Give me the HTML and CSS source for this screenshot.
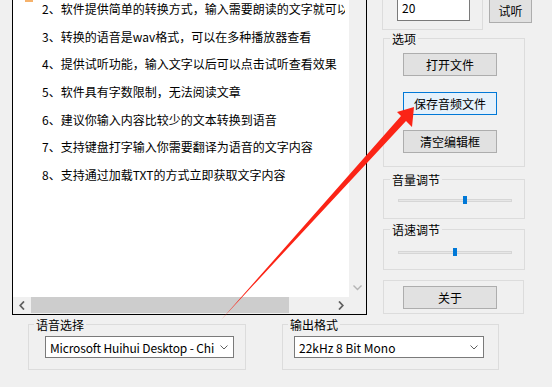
FILE: index.html
```html
<!DOCTYPE html>
<html lang="zh-CN">
<head>
    <meta charset="UTF-8">
    <title>文字转语音</title>
    <link rel="stylesheet" href="styles.css">
</head>
<body>
<div class="window">
    <div class="top">
        <!-- text editor with scrollbars -->
        <div class="editor">
            <div class="editor-body">
                <div class="text">
                    <div class="lines">
                        <div class="mark"></div>
                        <p class="first">2、软件提供简单的转换方式，输入需要朗读的文字就可以转换成语音</p>
                        <p>3、转换的语音是wav格式，可以在多种播放器查看</p>
                        <p>4、提供试听功能，输入文字以后可以点击试听查看效果</p>
                        <p>5、软件具有字数限制，无法阅读文章</p>
                        <p>6、建议你输入内容比较少的文本转换到语音</p>
                        <p>7、支持键盘打字输入你需要翻译为语音的文字内容</p>
                        <p>8、支持通过加载TXT的方式立即获取文字内容</p>
                    </div>
                </div>
                <div class="vscroll">
                    <svg width="9" height="6" viewBox="0 0 9 6"><polyline points="0.5,0.5 4.5,4.5 8.5,0.5" fill="none" stroke="#b4b4b4" stroke-width="1.4"/></svg>
                </div>
            </div>
            <div class="hscroll">
                <span class="hbtn"><svg width="6" height="9" viewBox="0 0 6 9"><polyline points="5,0.5 1.2,4.5 5,8.5" fill="none" stroke="#606060" stroke-width="1.8"/></svg></span>
                <div class="htrack"><div class="hthumb"></div></div>
                <span class="hbtn"><svg width="6" height="9" viewBox="0 0 6 9"><polyline points="1,0.5 4.8,4.5 1,8.5" fill="none" stroke="#606060" stroke-width="1.8"/></svg></span>
                <span class="corner"></span>
            </div>
        </div>

        <div class="side">
            <div class="row-listen">
                <div class="group-num">
                    <div class="num">20</div>
                </div>
                <button class="btn btn-listen">试听</button>
            </div>

            <fieldset class="group options">
                <legend>选项</legend>
                <button class="btn">打开文件</button>
                <button class="btn focus">保存音频文件</button>
                <button class="btn">清空编辑框</button>
            </fieldset>

            <fieldset class="group volume">
                <legend>音量调节</legend>
                <div class="slider"><span class="thumb" style="left: 64px"></span></div>
            </fieldset>

            <fieldset class="group speed">
                <legend>语速调节</legend>
                <div class="slider"><span class="thumb" style="left: 54px"></span></div>
            </fieldset>

            <div class="group about">
                <button class="btn">关于</button>
            </div>
        </div>
    </div>

    <div class="bottom">
        <fieldset class="group voice">
            <legend>语音选择</legend>
            <div class="combo">
                <span>Microsoft Huihui Desktop - Chi</span>
                <svg width="8" height="5" viewBox="0 0 8 5"><polyline points="0.5,0.5 4,4 7.5,0.5" fill="none" stroke="#606060" stroke-width="1"/></svg>
            </div>
        </fieldset>
        <fieldset class="group format">
            <legend>输出格式</legend>
            <div class="combo">
                <span>22kHz 8 Bit Mono</span>
                <svg width="8" height="5" viewBox="0 0 8 5"><polyline points="0.5,0.5 4,4 7.5,0.5" fill="none" stroke="#606060" stroke-width="1"/></svg>
            </div>
        </fieldset>
    </div>

    <!-- red annotation arrow drawn over the window -->
    <svg class="pointer" width="552" height="387" viewBox="0 0 552 387">
        <polygon points="414,107 412,127 406,121 221,320 401,116 397,112" fill="#fb2416"/>
    </svg>
</div>
</body>
</html>
```

FILE: styles.css
```css
* {
    box-sizing: border-box;
}

body {
    margin: 0;
    background: #f0f0f0;
    font-family: "Noto Sans CJK SC", sans-serif;
    font-size: 12px;
    color: #000;
    overflow: hidden;
}

.window {
    position: relative;
    width: 552px;
    height: 387px;
    overflow: hidden;
}

.top {
    display: flex;
    align-items: flex-start;
    height: 315px;
}

/* editor */
.editor {
    margin-left: 12px;
    width: 355px;
    height: 315px;
    border: 1px solid #000;
    border-top: none;
    display: flex;
    flex-direction: column;
}

.editor-body {
    display: flex;
    height: 297px;
    background: #fff;
}

.text {
    flex: 1;
    min-width: 0;
}

.lines {
    margin-right: 4px;
    overflow: hidden;
    white-space: nowrap;
    padding-left: 29px;
    height: 297px;
}

.mark {
    width: 8px;
    height: 2px;
    margin-left: -17px;
    background: #f6b26b;
}

.lines p {
    margin: 0;
    height: 27.7px;
    line-height: 27.7px;
}

.lines p.first {
    margin-top: -7px;
}

.vscroll {
    width: 17px;
    background: #f0f0f0;
    display: flex;
    flex-direction: column;
    justify-content: flex-end;
    align-items: center;
    padding-bottom: 6px;
}

.vscroll svg {
    display: block;
}

.hscroll {
    display: flex;
    height: 17px;
    background: #f0f0f0;
}

.hbtn {
    width: 17px;
    display: flex;
    align-items: center;
    justify-content: center;
}

.htrack {
    width: 302px;
}

.hthumb {
    margin-left: 1px;
    width: 258px;
    height: 16px;
    background: #cdcdcd;
}

.corner {
    width: 17px;
}

/* right column */
.side {
    margin-left: 15px;
    width: 150px;
}

.row-listen {
    display: flex;
    align-items: flex-start;
    height: 31px;
}

.group-num {
    width: 101px;
    height: 30px;
    border: 1px solid #dcdcdc;
    border-top: none;
}

.num {
    margin-left: 14px;
    width: 73px;
    height: 21px;
    border: 1px solid #7a7a7a;
    border-top: none;
    background: #fff;
    padding-left: 4px;
    line-height: 15px;
}

.btn {
    display: block;
    width: 94px;
    height: 23px;
    padding: 0;
    border: 1px solid #adadad;
    background: #e1e1e1;
    font-family: inherit;
    font-size: 12px;
    line-height: 21px;
    color: #000;
    text-align: center;
}

.btn.focus {
    border-color: #0078d7;
    background: #e5f1fb;
}

.btn-listen {
    margin-left: 6px;
    width: 43px;
    border-top: none;
    line-height: 22px;
}

.group {
    margin: 0;
    padding: 0;
    border: 1px solid #dcdcdc;
    min-width: 0;
}

.group legend {
    margin-left: 6px;
    padding: 0 2px;
    line-height: 15px;
}

.side .group {
    margin-left: 1px;
    width: 142px;
}

.options {
    height: 136px;
}

.options .btn {
    margin-left: 19px;
    margin-top: 16px;
}

.options .btn:first-of-type {
    margin-top: 7px;
}

.options .btn:last-of-type {
    margin-top: 15px;
}

.volume {
    margin-top: 5px;
    height: 47px;
}

.speed {
    margin-top: 3px;
    height: 48px;
}

.slider {
    position: relative;
    margin-left: 14px;
    margin-top: 12px;
    width: 114px;
    height: 3px;
    background: #e7e7e7;
    border: 1px solid #d6d6d6;
}

.speed .slider {
    margin-top: 14px;
}

.thumb {
    position: absolute;
    top: -4px;
    width: 4px;
    height: 8px;
    background: #0078d7;
}

.side .about {
    margin-top: 10px;
    width: 141px;
    height: 34px;
    padding-top: 5px;
}

.about .btn {
    margin-left: 19px;
}

/* bottom row */
.bottom {
    display: flex;
    margin-top: 2px;
    padding-left: 28px;
}

.voice {
    width: 218px;
    height: 53px;
}

.format {
    margin-left: 36px;
    width: 217px;
    height: 53px;
}

.bottom .group legend {
    margin-left: 5px;
}

.combo {
    display: flex;
    align-items: center;
    justify-content: space-between;
    margin-top: 4px;
    height: 22px;
    border: 1px solid #7a7a7a;
    background: #fff;
    padding: 0 5px 0 4px;
    white-space: nowrap;
}

.voice .combo {
    margin-left: 16px;
    width: 189px;
}

.voice .combo span {
    letter-spacing: -0.15px;
}

.format .combo {
    margin-left: 11px;
    width: 190px;
}

.combo svg {
    display: block;
    flex: none;
}

.pointer {
    position: absolute;
    top: 0;
    left: 0;
    pointer-events: none;
}
```
